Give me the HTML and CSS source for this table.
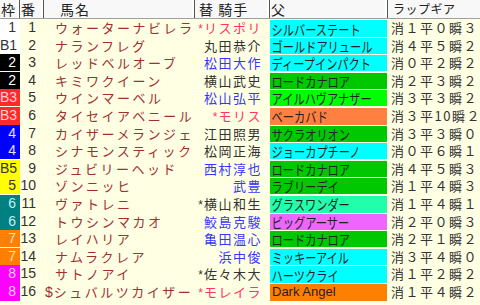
FILE: index.html
```html
<!DOCTYPE html>
<html lang="ja">
<head>
<meta charset="utf-8">
<link rel="stylesheet" href="styles.css">
</head>
<body>
<div class="table">
  <div class="head">
    <div class="h">枠</div>
    <div class="h">番</div>
    <div class="h hname">馬名</div>
    <div class="h hjockey">替 騎手</div>
    <div class="h">父</div>
    <div class="h hlap">ラップギア</div>
  </div>

  <div class="row"><div class="waku w1">1</div><div class="num">1</div><div class="name">ウォーターナビレラ</div><div class="jockey pink"><span class="ast">*</span>リスポリ</div><div class="sire cyan"><span>シルバーステート</span></div><div class="lap">消１平０瞬３</div></div>
  <div class="row"><div class="waku w1">B1</div><div class="num">2</div><div class="name">ナランフレグ</div><div class="jockey">丸田恭介</div><div class="sire cyan"><span>ゴールドアリュール</span></div><div class="lap">消４平５瞬２</div></div>
  <div class="row"><div class="waku w2">2</div><div class="num">3</div><div class="name">レッドベルオーブ</div><div class="jockey blue">松田大作</div><div class="sire cyan"><span>ディープインパクト</span></div><div class="lap">消０平２瞬２</div></div>
  <div class="row"><div class="waku w2">2</div><div class="num">4</div><div class="name">キミワクイーン</div><div class="jockey">横山武史</div><div class="sire green"><span>ロードカナロア</span></div><div class="lap">消２平３瞬２</div></div>
  <div class="row"><div class="waku w3">B3</div><div class="num">5</div><div class="name">ウインマーベル</div><div class="jockey blue">松山弘平</div><div class="sire lime"><span>アイルハヴアナザー</span></div><div class="lap">消３平３瞬２</div></div>
  <div class="row"><div class="waku w3">B3</div><div class="num">6</div><div class="name">タイセイアベニール</div><div class="jockey pink"><span class="ast">*</span>モリス</div><div class="sire orange"><span>ベーカバド</span></div><div class="lap">消３平10瞬２</div></div>
  <div class="row"><div class="waku w4">4</div><div class="num">7</div><div class="name">カイザーメランジェ</div><div class="jockey">江田照男</div><div class="sire green"><span>サクラオリオン</span></div><div class="lap">消３平３瞬０</div></div>
  <div class="row"><div class="waku w4">4</div><div class="num">8</div><div class="name">シナモンスティック</div><div class="jockey">松岡正海</div><div class="sire cyan"><span>ジョーカプチーノ</span></div><div class="lap">消０平６瞬１</div></div>
  <div class="row"><div class="waku w5">B5</div><div class="num">9</div><div class="name">ジュビリーヘッド</div><div class="jockey blue">西村淳也</div><div class="sire green"><span>ロードカナロア</span></div><div class="lap">消４平５瞬３</div></div>
  <div class="row"><div class="waku w5">5</div><div class="num">10</div><div class="name">ゾンニッヒ</div><div class="jockey blue">武豊</div><div class="sire green"><span>ラブリーデイ</span></div><div class="lap">消１平４瞬３</div></div>
  <div class="row"><div class="waku w6">6</div><div class="num">11</div><div class="name">ヴァトレニ</div><div class="jockey"><span class="ast">*</span>横山和生</div><div class="sire spring"><span>グラスワンダー</span></div><div class="lap">消１平４瞬１</div></div>
  <div class="row"><div class="waku w6">6</div><div class="num">12</div><div class="name">トウシンマカオ</div><div class="jockey blue">鮫島克駿</div><div class="sire violet"><span>ビッグアーサー</span></div><div class="lap">消２平０瞬３</div></div>
  <div class="row"><div class="waku w7">7</div><div class="num">13</div><div class="name">レイハリア</div><div class="jockey blue">亀田温心</div><div class="sire green"><span>ロードカナロア</span></div><div class="lap">消２平１瞬２</div></div>
  <div class="row"><div class="waku w7">7</div><div class="num">14</div><div class="name">ナムラクレア</div><div class="jockey blue">浜中俊</div><div class="sire cyan"><span>ミッキーアイル</span></div><div class="lap">消３平４瞬０</div></div>
  <div class="row"><div class="waku w8">8</div><div class="num">15</div><div class="name">サトノアイ</div><div class="jockey"><span class="ast">*</span>佐々木大</div><div class="sire cyan"><span>ハーツクライ</span></div><div class="lap">消１平２瞬２</div></div>
  <div class="row"><div class="waku w8">8</div><div class="num">16</div><div class="name"><span class="mark">$</span>シュバルツカイザー</div><div class="jockey pink"><span class="ast">*</span>モレイラ</div><div class="sire dark"><span class="latin">Dark Angel</span></div><div class="lap">消１平４瞬２</div></div>
</div>
</body>
</html>
```

FILE: styles.css
```css
html, body {
  margin: 0;
  padding: 0;
  background: #ffffe4;
}

body {
  width: 480px;
  height: 305px;
  overflow: hidden;
  font-family: "Noto Sans CJK JP", sans-serif;
  font-size: 13px;
  color: #333;
}

.table {
  display: flex;
  flex-direction: column;
}

.head,
.row {
  display: grid;
  grid-template-columns: 20px 24px 151px 75px 118px 92px;
}

.head {
  height: 18px;
  background: #f8f8f8;
  border-bottom: 1px solid #a0a0a0;
}

.h {
  display: flex;
  align-items: center;
  padding-left: 1px;
  border-right: 1px solid #555;
  box-shadow: inset -2px 0 0 #fff;
  font-size: 14px;
  line-height: 18px;
  color: #222;
  white-space: nowrap;
}

.h:last-child {
  border-right: none;
  box-shadow: none;
}

.hname {
  padding-left: 16px;
  letter-spacing: 1px;
}

.hjockey {
  padding-left: 4px;
  letter-spacing: 1px;
}

.hlap {
  padding-left: 5px;
  font-size: 12px;
  letter-spacing: 0.5px;
}

.row {
  height: 17.6px;
  line-height: 17px;
}

.waku {
  margin-bottom: 1px;
  text-align: right;
  padding-right: 4px;
  font-family: "Liberation Sans", sans-serif;
  font-size: 14px;
  color: #fff;
}

.w1 { background: #fff; color: #333; }
.w2 { background: #000; color: #fff; }
.w3 { background: #ff2a2a; color: #ffd0d0; }
.w4 { background: #0000ff; color: #e0e0ff; }
.w5 { background: #ffff00; color: #333; }
.w6 { background: #008080; color: #c0f0f0; }
.w7 { background: #ff8000; color: #ffe0c0; }
.w8 { background: #ff00ff; color: #ffd0ff; }

.num {
  text-align: right;
  padding-right: 8px;
  font-family: "Liberation Sans", sans-serif;
  font-size: 14px;
  color: #333;
}

.name {
  padding-left: 11px;
  color: #a03030;
  letter-spacing: 2.5px;
  white-space: nowrap;
}

.mark {
  margin-left: -10px;
  letter-spacing: 1px;
  font-family: "Liberation Sans", sans-serif;
  font-size: 14px;
}

.jockey {
  text-align: right;
  padding-right: 8px;
  white-space: nowrap;
  letter-spacing: 1.5px;
}

.ast {
  font-family: "Liberation Sans", sans-serif;
  font-size: 12px;
  letter-spacing: 1px;
}

.pink { color: #ff3366; }
.blue { color: #3636ff; }

.sire {
  display: flex;
  align-items: center;
  margin: 1px 1px 1px 0;
  white-space: nowrap;
  color: #222;
  line-height: 16px;
  font-size: 14px;
}

.sire span {
  display: inline-block;
  padding-left: 2px;
  transform: scaleX(0.8);
  transform-origin: left center;
}

.sire span.latin {
  transform: none;
  font-family: "Liberation Sans", sans-serif;
  font-size: 13px;
}

.cyan { background: #00ffff; }
.green { background: #00c800; }
.lime { background: #00ff00; }
.orange { background: #ff8040; }
.spring { background: #22ffaa; }
.violet { background: #ee66ff; }
.dark { background: #ff8000; }

.lap {
  padding-left: 3px;
  letter-spacing: 1.5px;
  white-space: nowrap;
  color: #333;
}
```
